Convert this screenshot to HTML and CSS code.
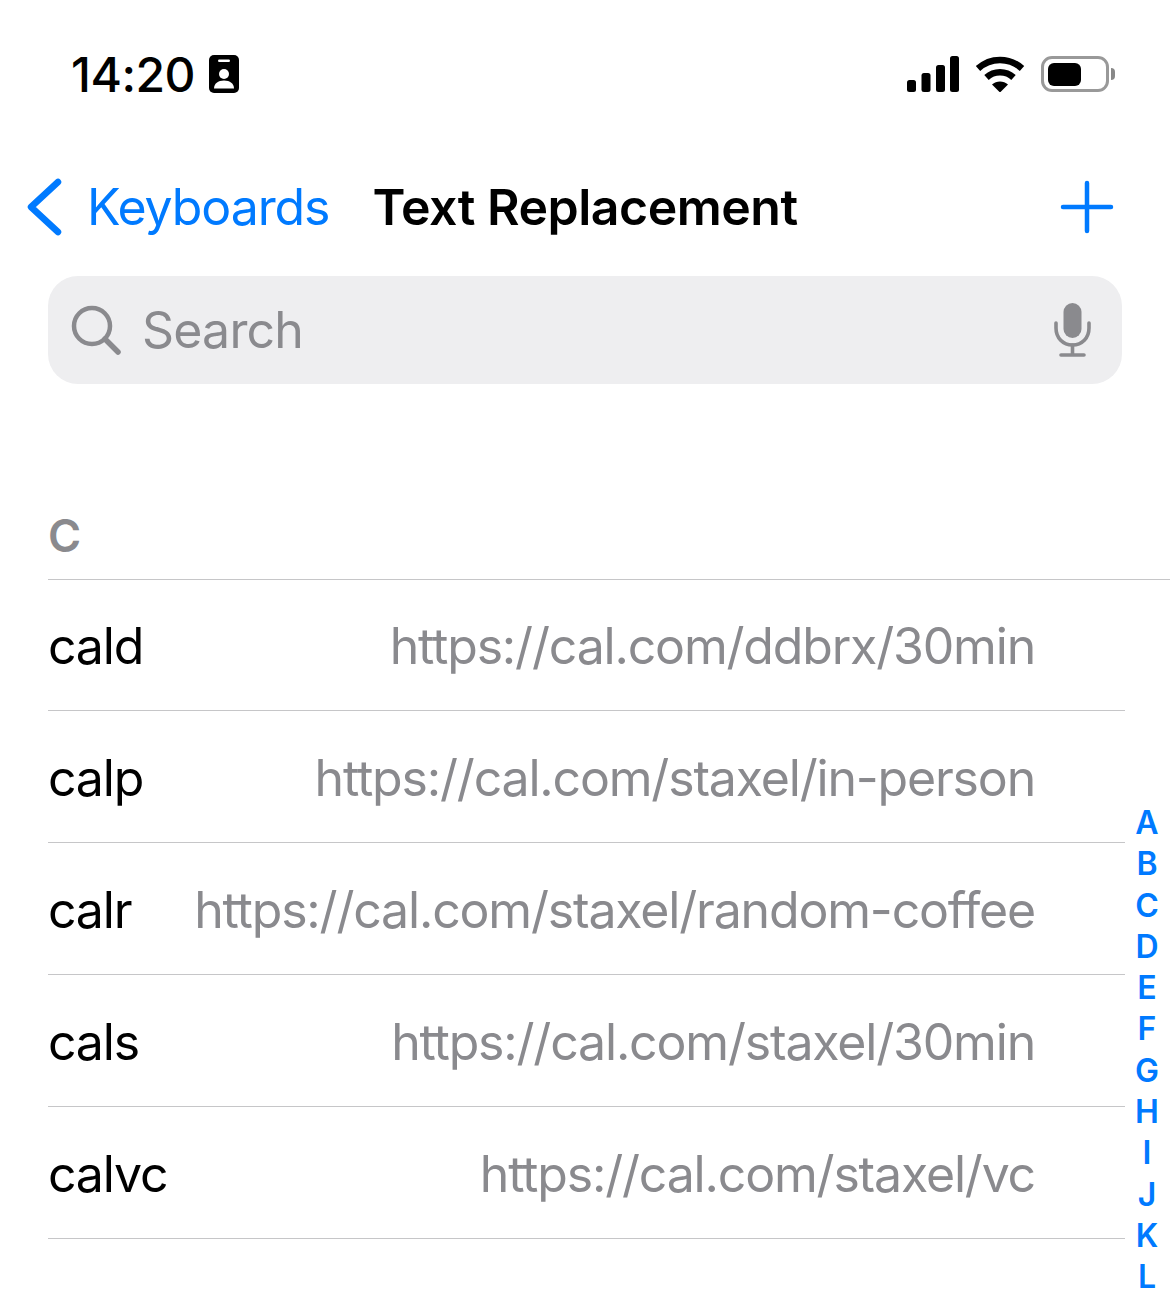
FILE: index.html
```html
<html>
<head>
	<link rel="stylesheet" href="styles.css">
</head>
<body>
	<div class="statusbar">
		<div class="clock">
			<span class="time">14:20</span>
			<svg class="badge" width="30" height="38" viewBox="0 0 30 38">
				<rect x="0" y="0" width="30" height="38" rx="5" fill="#000"/>
				<rect x="9" y="4.500" width="12" height="2.500" rx="1.200" fill="#fff"/>
				<circle cx="15" cy="19" r="5" fill="#fff"/>
				<path d="M5 33.500c0-5 4-8 10-8s10 3 10 8z" fill="#fff"/>
			</svg>
		</div>
		<div class="status-icons">
			<svg width="52" height="36" viewBox="0 0 52 36">
				<rect x="0" y="24" width="9" height="12" rx="2.500"/>
				<rect x="14.500" y="17" width="9" height="19" rx="2.500"/>
				<rect x="29" y="9" width="9" height="27" rx="2.500"/>
				<rect x="43" y="0" width="9" height="36" rx="2.500"/>
			</svg>
			<svg class="wifi" width="50" height="36" viewBox="0 0 50 36">
				<path d="M3 12.500C15.500 1 34.500 1 47 12.500" fill="none" stroke="#000" stroke-width="6.500"/>
				<path d="M11.500 21.500C19 14.500 31 14.500 38.500 21.500" fill="none" stroke="#000" stroke-width="6.500"/>
				<path d="M17 28.500C21.500 24.500 28.500 24.500 33 28.500L25 36.500z"/>
			</svg>
			<div class="battery">
				<div class="battery-body"><div class="battery-fill"></div></div>
				<div class="battery-cap"></div>
			</div>
		</div>
	</div>

	<div class="navbar">
		<div class="back">
			<svg width="36" height="58" viewBox="0 0 36 58">
				<path d="M32 4L5 29L32 54" fill="none" stroke="#007aff" stroke-width="6.500" stroke-linecap="round" stroke-linejoin="round"/>
			</svg>
			<span class="back-label">Keyboards</span>
		</div>
		<div class="title">Text Replacement</div>
		<svg class="add" width="54" height="54" viewBox="0 0 54 54">
			<path d="M27 3V51M3 27H51" fill="none" stroke="#007aff" stroke-width="4.500" stroke-linecap="round"/>
		</svg>
	</div>

	<div class="search">
		<svg width="50" height="50" viewBox="0 0 50 50">
			<circle cx="21" cy="21" r="18" fill="none" stroke="#8a8a8e" stroke-width="4.500"/>
			<path d="M34 34L47 47" fill="none" stroke="#8a8a8e" stroke-width="5.500" stroke-linecap="round"/>
		</svg>
		<span class="search-text">Search</span>
		<svg class="mic" width="38" height="54" viewBox="0 0 38 54">
			<rect x="9.500" y="0" width="18" height="35" rx="9" fill="#8a8a8e"/>
			<path d="M2 20V25C2 35 9 42 18.500 42S35 35 35 25V20" fill="none" stroke="#8a8a8e" stroke-width="3.600" stroke-linecap="round"/>
			<path d="M18.500 42V51M7 52H30" fill="none" stroke="#8a8a8e" stroke-width="3.600" stroke-linecap="round"/>
		</svg>
	</div>

	<div class="section-head">C</div>

	<div class="list">
		<div class="row"><span class="short">cald</span><span class="long">https://cal.com/ddbrx/30min</span></div>
		<div class="row"><span class="short">calp</span><span class="long">https://cal.com/staxel/in-person</span></div>
		<div class="row"><span class="short">calr</span><span class="long">https://cal.com/staxel/random-coffee</span></div>
		<div class="row"><span class="short">cals</span><span class="long">https://cal.com/staxel/30min</span></div>
		<div class="row"><span class="short">calvc</span><span class="long">https://cal.com/staxel/vc</span></div>
	</div>

	<div class="index">
		<span>A</span><span>B</span><span>C</span><span>D</span><span>E</span><span>F</span>
		<span>G</span><span>H</span><span>I</span><span>J</span><span>K</span><span>L</span>
	</div>
</body>
</html>
```

FILE: styles.css
```css
html,body{height:1292px; overflow:hidden;}
body{margin:0; background-color:#fff; color:#000; font-family:Inter,"Liberation Sans",sans-serif; position:relative;}

.statusbar{display:flex; justify-content:space-between; align-items:center; height:74px; padding:37px 55px 0 71px; box-sizing:content-box;}
.clock{display:flex; align-items:center; gap:14px;}
.time{font-size:48px; font-weight:500; letter-spacing:-0.500px;}
.status-icons{display:flex; align-items:center; gap:16px;}
.status-icons svg{display:block;}
.battery{display:flex; align-items:center; gap:2px;}
.battery-body{width:68px; height:36px; box-sizing:border-box; border:3px solid #999; border-radius:11px; padding:3.500px;}
.battery-fill{width:33px; height:100%; background-color:#000; border-radius:6px;}
.battery-cap{width:4px; height:12px; background-color:#888; border-radius:0 6px 6px 0;}

.navbar{display:flex; align-items:center; height:112px; margin-top:40px; padding:0 56px 0 26px;}
.back{display:flex; align-items:center; gap:25px; color:#007aff; font-size:50px; letter-spacing:-1.100px;}
.back svg{flex:none;}
.title{font-size:50px; font-weight:600; letter-spacing:-0.500px; margin-left:43px;}
.add{margin-left:auto;}

.search{display:flex; align-items:center; height:108px; margin:13px 48px 0 48px; padding:0 30px 0 23px; background-color:#eeeef0; border-radius:30px; color:#8a8a8e; font-size:50px; letter-spacing:-0.800px;}
.search-text{margin-left:21px;}
.mic{margin-left:auto;}

.section-head{margin:120px 0 0 48px; height:76px; box-sizing:border-box; padding-top:3px; font-size:45px; font-weight:600; color:#8a8a8e; line-height:58px; border-bottom:1px solid #c6c6c8;}

.list{margin:-1px 45px 0 48px;}
.row{display:flex; justify-content:space-between; align-items:center; height:132px; box-sizing:border-box; border-bottom:1px solid #c6c6c8; font-size:50px; letter-spacing:-1.180px; padding:2px 90px 0 0;}
.long{color:#8a8a8e;}

.index{position:absolute; top:808px; right:11px; width:24px; display:flex; flex-direction:column; align-items:center; gap:11.300px; color:#007aff; font-size:32px; font-weight:600;}
.index span{height:30px; line-height:30px;}
```
